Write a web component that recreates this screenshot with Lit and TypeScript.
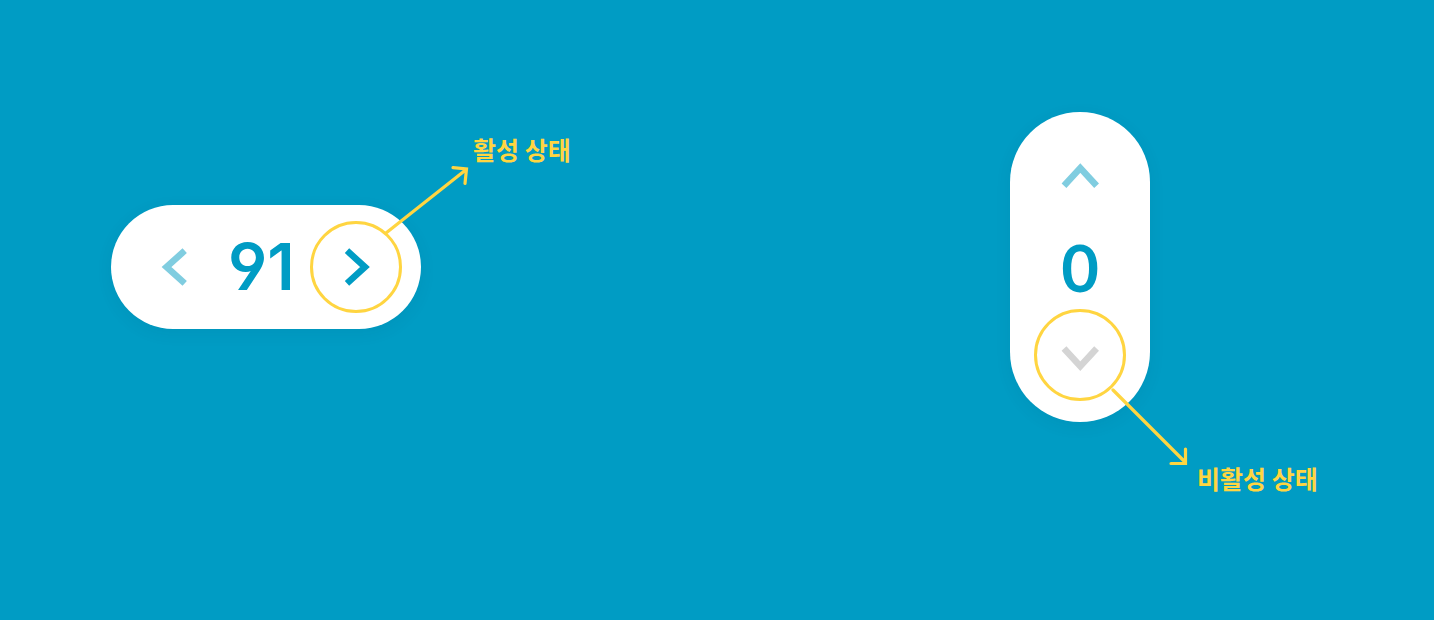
import { LitElement, html, css, svg } from "lit";
import { customElement, property } from "lit/decorators.js";

const CHEVRONS = {
  left: "M54.700 29.700 L36.500 46 L54.700 62.300",
  right: "M37 29.700 L55 46 L37 62.300",
  up: "M30 52.800 L46.300 35 L62.600 52.800",
  down: "M30 39.500 L46.300 57.300 L62.600 39.500",
};

type Direction = keyof typeof CHEVRONS;

@customElement("number-stepper")
export class NumberStepper extends LitElement {
  @property() orientation: "horizontal" | "vertical" = "horizontal";
  @property({ type: Number }) value = 0;
  @property() note = "";

  static styles = css`
    :host {
      display: block;
    }
    .pill {
      display: flex;
      align-items: center;
      justify-content: space-between;
      background: #fff;
      border-radius: 70px;
      box-shadow: 0 4px 16px rgba(0, 60, 90, 0.08);
    }
    .pill.horizontal {
      gap: 4px;
      padding: 16px 19px;
    }
    .pill.vertical {
      flex-direction: column;
      padding: 21px 24px;
    }
    .value {
      box-sizing: border-box;
      min-width: 80px;
      font: 600 65px/84px Inter, sans-serif;
      font-feature-settings: "cv04";
      color: #009cc4;
    }
    .horizontal .value {
      padding-left: 2px;
    }
    .vertical .value {
      font-family: Lato, sans-serif;
      font-weight: 700;
      text-align: center;
    }
    .control {
      position: relative;
    }
    .button {
      display: block;
      width: 92px;
      height: 92px;
      padding: 0;
      border: 0;
      border-radius: 50%;
      background: none;
      color: #009cc4;
      cursor: pointer;
    }
    .soft {
      color: #80cde0;
    }
    .button:disabled {
      color: #d4d4d4;
      cursor: default;
    }
    .ringed {
      border: 3px solid #ffd541;
    }
    .icon {
      display: block;
      width: 92px;
      height: 92px;
    }
    .ringed .icon {
      margin: -3px;
    }
    .callout {
      position: absolute;
      display: flex;
      pointer-events: none;
    }
    .callout.horizontal {
      left: 74px;
      bottom: 77px;
      gap: 3px;
      align-items: flex-start;
    }
    .callout.vertical {
      left: 77px;
      top: 79px;
      gap: 8px;
      align-items: flex-end;
    }
    .arrow {
      display: block;
      flex: none;
    }
    .callout.horizontal .arrow {
      margin-top: 35px;
    }
    .callout.vertical .arrow {
      margin-bottom: 29px;
    }
    .note {
      font: 700 25px/36px "Noto Sans CJK KR", sans-serif;
      color: #ffd541;
      white-space: nowrap;
    }
  `;

  private renderArrow() {
    const up = this.orientation === "horizontal";
    return html`<svg
      class="arrow"
      width=${up ? 86 : 78}
      height=${up ? 70 : 79}
      fill="none"
      stroke="#ffd541"
      stroke-width="3.2"
      stroke-linecap="round"
      aria-hidden="true"
    >
      ${up
        ? svg`<path d="M2 67 L81 4.500 M69 1.600 L82.500 3 L81 17.500" />`
        : svg`<path d="M2 2 L74 74 M74.500 61 V75.500 H60" />`}
    </svg>`;
  }

  private renderButton(direction: Direction, step: number) {
    const ringed = step === (this.orientation === "horizontal" ? 1 : -1);
    const disabled = this.value === 0 && step < 0;
    return html`<div class="control">
      <button
        class="button ${ringed ? "ringed" : "soft"}"
        aria-label=${step > 0 ? "+1" : "-1"}
        ?disabled=${disabled}
        @click=${() => (this.value = Math.max(0, this.value + step))}
      >
        <svg class="icon" viewBox="0 0 92 92" fill="none" stroke="currentColor" stroke-width="6.5">
          <path d=${CHEVRONS[direction]} />
        </svg>
      </button>
      ${ringed
        ? html`<div class="callout ${this.orientation}">
            ${this.renderArrow()}<span class="note">${this.note}</span>
          </div>`
        : ""}
    </div>`;
  }

  render() {
    const horizontal = this.orientation === "horizontal";
    return html`<div class="pill ${this.orientation}">
      ${horizontal ? this.renderButton("left", -1) : this.renderButton("up", 1)}
      <output class="value">${this.value}</output>
      ${horizontal ? this.renderButton("right", 1) : this.renderButton("down", -1)}
    </div>`;
  }
}

@customElement("app-root")
export class AppRoot extends LitElement {
  static styles = css`
    :host {
      display: block;
    }
    .stage {
      box-sizing: border-box;
      min-height: 100vh;
      padding: 112px 284px 86px 111px;
      background: #009cc4;
    }
    .row {
      display: flex;
      align-items: center;
      justify-content: space-between;
    }
  `;

  render() {
    return html`<main class="stage">
      <div class="row">
        <number-stepper orientation="horizontal" .value=${91} note="활성 상태"></number-stepper>
        <number-stepper orientation="vertical" .value=${0} note="비활성 상태"></number-stepper>
      </div>
    </main>`;
  }
}
